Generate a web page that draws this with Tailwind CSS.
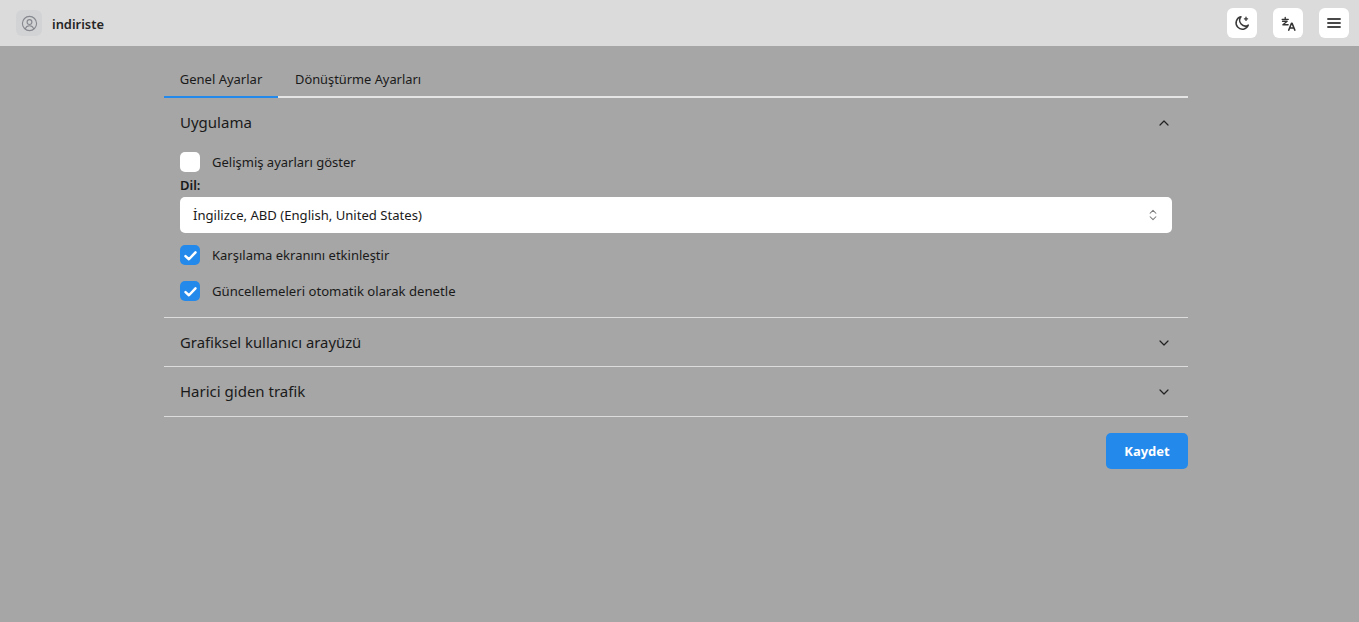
<!DOCTYPE html>
<html lang="tr">
<head>
<meta charset="utf-8">
<title>indiriste</title>
<script src="https://cdn.jsdelivr.net/npm/@tailwindcss/browser@4"></script>
</head>
<body class="h-[622px] overflow-hidden bg-[#a6a6a6] font-['Noto_Sans',sans-serif] text-[#1a1a1a]">
<header class="flex h-[46px] items-center justify-between bg-[#dbdbdb] pl-4 pr-[10px]">
  <div class="flex items-center gap-[10px]">
    <div class="flex h-[26px] w-[26px] items-center justify-center rounded-md bg-[#d2d3d5]">
      <svg class="h-[17px] w-[17px] text-[#85888e]" viewBox="0 0 24 24" fill="none" stroke="currentColor" stroke-width="1.6" stroke-linecap="round" stroke-linejoin="round"><circle cx="12" cy="12" r="10"/><circle cx="12" cy="10" r="3.4"/><path d="M6.2 19.3c.8-2.700 3-4.200 5.800-4.200s5 1.500 5.800 4.200"/></svg>
    </div>
    <span class="pt-[3px] text-[12.900px] font-semibold text-[#262626]">indiriste</span>
  </div>
  <div class="flex items-center gap-4">
    <button class="flex h-[30px] w-[30px] items-center justify-center rounded-md bg-white text-[#3a3a3a]">
      <svg class="h-4 w-4" viewBox="0 0 16 16" fill="none" stroke="currentColor" stroke-width="1.500" stroke-linecap="round" stroke-linejoin="round"><path d="M7 1.800a6.300 6.300 0 1 0 7.300 8.300A5.600 5.600 0 0 1 7 1.800z"/><path d="M12 2.200v3.200M10.400 3.800h3.200" stroke-width="1.300"/></svg>
    </button>
    <button class="flex h-[30px] w-[30px] items-center justify-center rounded-md bg-white text-[#333]">
      <svg class="h-[15px] w-[15px]" viewBox="0 0 16 16" fill="none" stroke="currentColor" stroke-width="1.400" stroke-linecap="round" stroke-linejoin="round"><path d="M1.200 3.500h6.600M4.500 1.500v2M1.600 5.600h5L2 9.300h5.600"/><path d="M8.300 15l2.900-7.300h.6L14.700 15M9.500 12.800h4" stroke-width="1.700"/></svg>
    </button>
    <button class="flex h-[30px] w-[30px] items-center justify-center rounded-md bg-white text-[#484848]">
      <svg class="h-4 w-4" viewBox="0 0 24 24" fill="none" stroke="currentColor" stroke-width="2.800" stroke-linecap="round"><path d="M3 6h18M3 12h18M3 18h18"/></svg>
    </button>
  </div>
</header>
<div class="pr-[7px]">
<main class="mx-auto w-[1024px]">
  <nav class="mt-[16px] flex h-[36px] border-b-2 border-[#e5e5e5] text-[13px]">
    <span class="-mb-[2px] flex h-[36px] w-[114px] items-center justify-center border-b-2 border-[#2389ea] pt-[2px]">Genel Ayarlar</span>
    <span class="flex h-[34px] items-center px-[17px] pt-[2px] text-[12.850px]">Dönüştürme Ayarları</span>
  </nav>
  <section class="border-b border-[#dcdcdc] px-4 pb-[16px]">
    <div class="flex h-[50px] items-center justify-between">
      <h2 class="pb-[2px] text-[15px]">Uygulama</h2>
      <svg class="h-4 w-4" viewBox="0 0 24 24" fill="none" stroke="#222" stroke-width="1.800" stroke-linecap="round" stroke-linejoin="round"><path d="M6 15l6-6 6 6"/></svg>
    </div>
    <label class="mt-[4px] flex h-[20px] items-center gap-3 text-[13px]">
      <span class="h-5 w-5 rounded-[5px] bg-white"></span><span class="pt-[2px]">Gelişmiş ayarları göster</span>
    </label>
    <div class="mt-[3px] h-[20px] text-[13px] font-semibold leading-[20px]">Dil:</div>
    <div class="mt-[2px] flex h-[36px] items-center justify-between rounded-[5px] bg-white pl-[13px] pr-[12px] text-[13.100px]">
      <span class="pt-[2px]">İngilizce, ABD (English, United States)</span>
      <svg class="h-[14px] w-[14px]" viewBox="0 0 24 24" fill="none" stroke="#7a7a7a" stroke-width="1.800" stroke-linecap="round" stroke-linejoin="round"><path d="M7 9l5-5 5 5M7 15l5 5 5-5"/></svg>
    </div>
    <label class="mt-[12px] flex h-[20px] items-center gap-3 text-[13px]">
      <span class="flex h-5 w-5 items-center justify-center rounded-[5px] bg-[#2389ea]"><svg class="h-[15px] w-[15px]" viewBox="0 0 24 24" fill="none" stroke="white" stroke-width="4" stroke-linecap="round" stroke-linejoin="round"><path d="M4 13l5.500 5L20 7"/></svg></span><span class="pt-[2px]">Karşılama ekranını etkinleştir</span>
    </label>
    <label class="mt-[16px] flex h-[20px] items-center gap-3 text-[13.150px]">
      <span class="flex h-5 w-5 items-center justify-center rounded-[5px] bg-[#2389ea]"><svg class="h-[15px] w-[15px]" viewBox="0 0 24 24" fill="none" stroke="white" stroke-width="4" stroke-linecap="round" stroke-linejoin="round"><path d="M4 13l5.500 5L20 7"/></svg></span><span class="pt-[2px]">Güncellemeleri otomatik olarak denetle</span>
    </label>
  </section>
  <section class="flex h-[49px] items-center justify-between border-b border-[#dcdcdc] px-4">
    <h2 class="text-[14.850px]">Grafiksel kullanıcı arayüzü</h2>
    <svg class="mt-[1px] h-4 w-4" viewBox="0 0 24 24" fill="none" stroke="#222" stroke-width="1.800" stroke-linecap="round" stroke-linejoin="round"><path d="M6 9l6 6 6-6"/></svg>
  </section>
  <section class="flex h-[50px] items-center justify-between border-b border-[#dcdcdc] px-4">
    <h2 class="text-[15px]">Harici giden trafik</h2>
    <svg class="mt-[1px] h-4 w-4" viewBox="0 0 24 24" fill="none" stroke="#222" stroke-width="1.800" stroke-linecap="round" stroke-linejoin="round"><path d="M6 9l6 6 6-6"/></svg>
  </section>
  <div class="mt-4 flex justify-end">
    <button class="h-9 w-[82px] rounded-[5px] bg-[#2389ea] pt-[2px] text-[13px] font-bold text-white">Kaydet</button>
  </div>
</main>
</div>
</body>
</html>
